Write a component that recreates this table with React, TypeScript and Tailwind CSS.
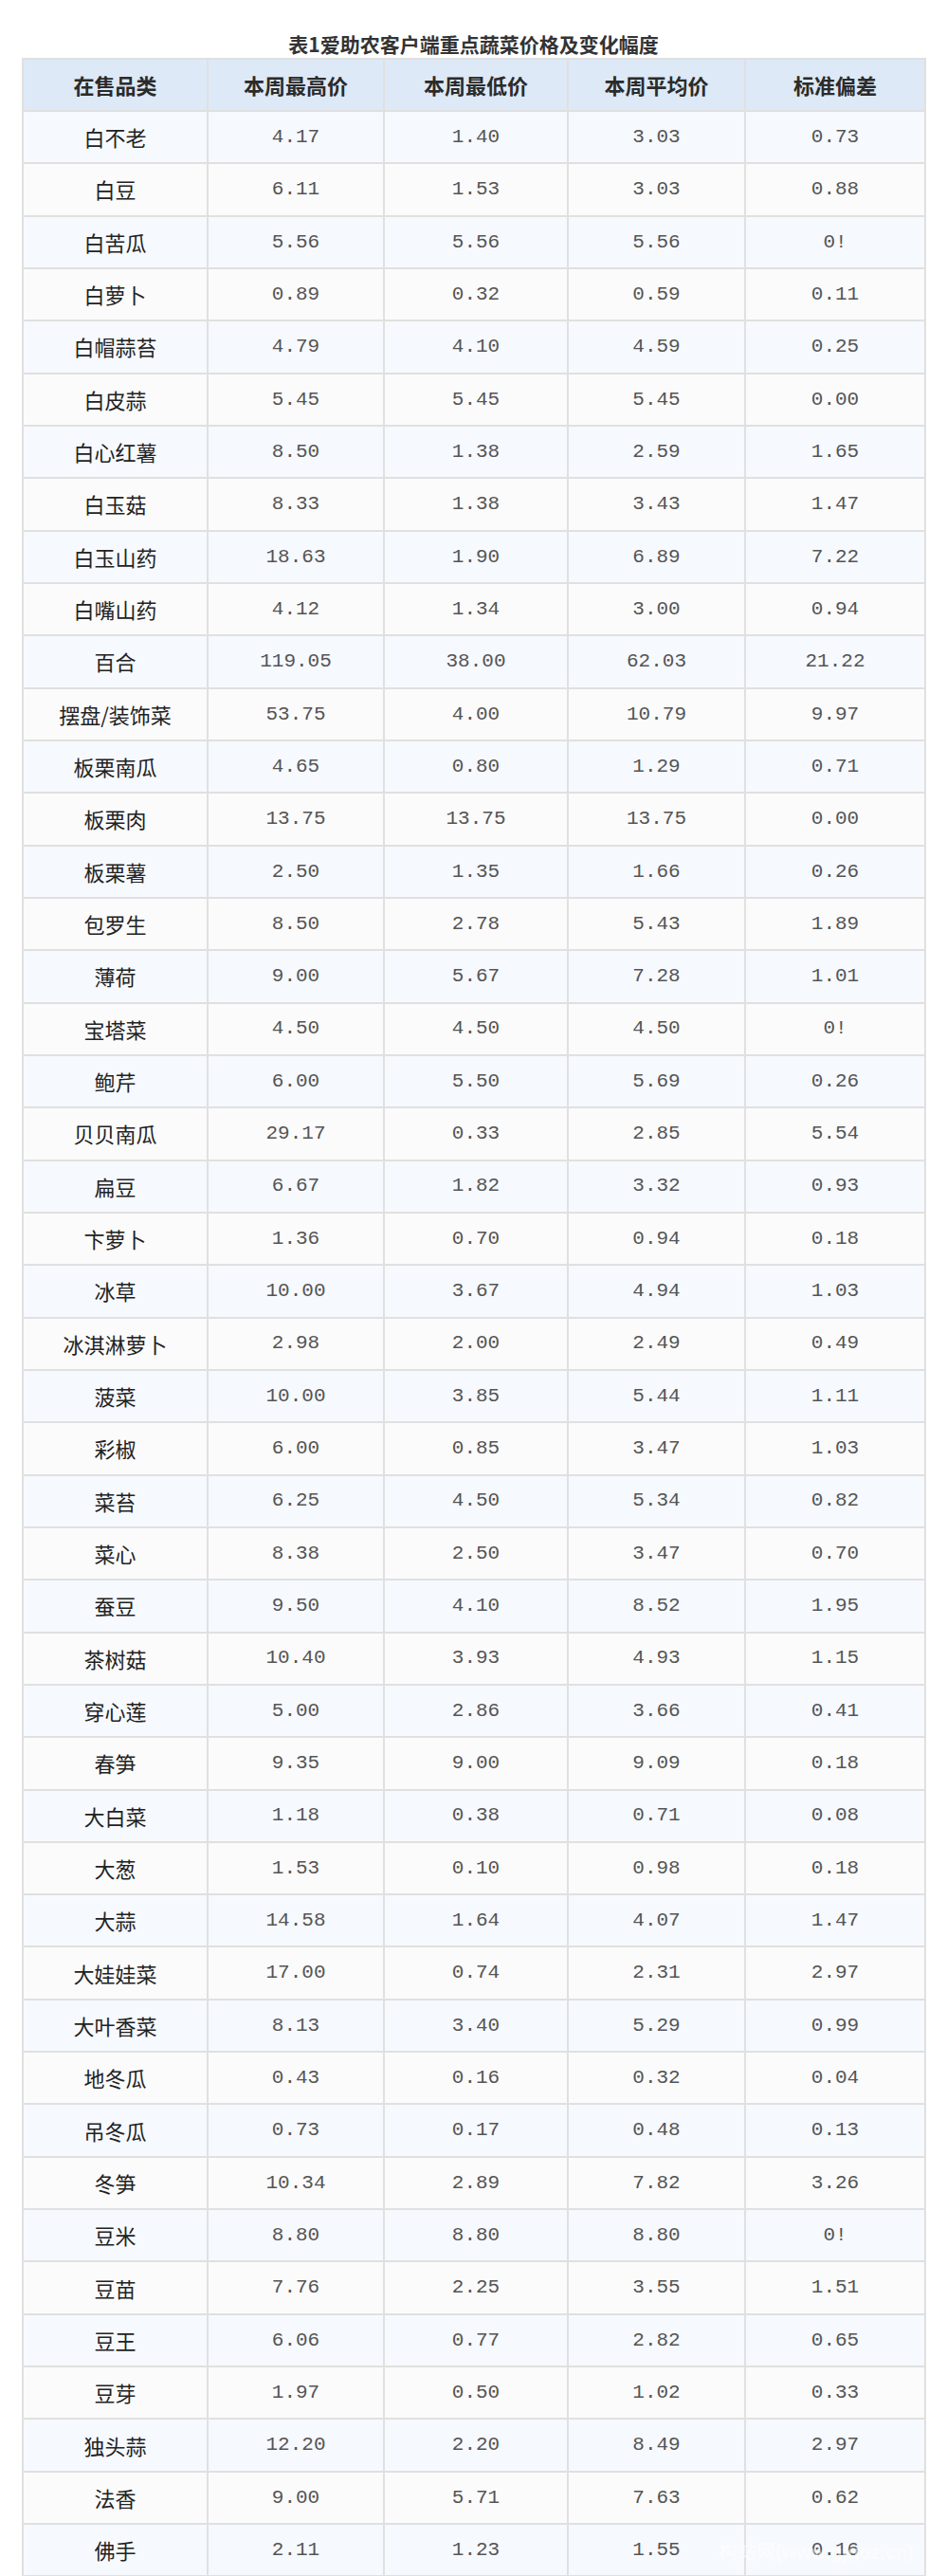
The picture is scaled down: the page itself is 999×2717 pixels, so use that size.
import React from 'react';

const ROWS: [string, string, string, string, string][] = [
  ['白不老', '4.17', '1.40', '3.03', '0.73'],
  ['白豆', '6.11', '1.53', '3.03', '0.88'],
  ['白苦瓜', '5.56', '5.56', '5.56', '0!'],
  ['白萝卜', '0.89', '0.32', '0.59', '0.11'],
  ['白帽蒜苔', '4.79', '4.10', '4.59', '0.25'],
  ['白皮蒜', '5.45', '5.45', '5.45', '0.00'],
  ['白心红薯', '8.50', '1.38', '2.59', '1.65'],
  ['白玉菇', '8.33', '1.38', '3.43', '1.47'],
  ['白玉山药', '18.63', '1.90', '6.89', '7.22'],
  ['白嘴山药', '4.12', '1.34', '3.00', '0.94'],
  ['百合', '119.05', '38.00', '62.03', '21.22'],
  ['摆盘/装饰菜', '53.75', '4.00', '10.79', '9.97'],
  ['板栗南瓜', '4.65', '0.80', '1.29', '0.71'],
  ['板栗肉', '13.75', '13.75', '13.75', '0.00'],
  ['板栗薯', '2.50', '1.35', '1.66', '0.26'],
  ['包罗生', '8.50', '2.78', '5.43', '1.89'],
  ['薄荷', '9.00', '5.67', '7.28', '1.01'],
  ['宝塔菜', '4.50', '4.50', '4.50', '0!'],
  ['鲍芹', '6.00', '5.50', '5.69', '0.26'],
  ['贝贝南瓜', '29.17', '0.33', '2.85', '5.54'],
  ['扁豆', '6.67', '1.82', '3.32', '0.93'],
  ['卞萝卜', '1.36', '0.70', '0.94', '0.18'],
  ['冰草', '10.00', '3.67', '4.94', '1.03'],
  ['冰淇淋萝卜', '2.98', '2.00', '2.49', '0.49'],
  ['菠菜', '10.00', '3.85', '5.44', '1.11'],
  ['彩椒', '6.00', '0.85', '3.47', '1.03'],
  ['菜苔', '6.25', '4.50', '5.34', '0.82'],
  ['菜心', '8.38', '2.50', '3.47', '0.70'],
  ['蚕豆', '9.50', '4.10', '8.52', '1.95'],
  ['茶树菇', '10.40', '3.93', '4.93', '1.15'],
  ['穿心莲', '5.00', '2.86', '3.66', '0.41'],
  ['春笋', '9.35', '9.00', '9.09', '0.18'],
  ['大白菜', '1.18', '0.38', '0.71', '0.08'],
  ['大葱', '1.53', '0.10', '0.98', '0.18'],
  ['大蒜', '14.58', '1.64', '4.07', '1.47'],
  ['大娃娃菜', '17.00', '0.74', '2.31', '2.97'],
  ['大叶香菜', '8.13', '3.40', '5.29', '0.99'],
  ['地冬瓜', '0.43', '0.16', '0.32', '0.04'],
  ['吊冬瓜', '0.73', '0.17', '0.48', '0.13'],
  ['冬笋', '10.34', '2.89', '7.82', '3.26'],
  ['豆米', '8.80', '8.80', '8.80', '0!'],
  ['豆苗', '7.76', '2.25', '3.55', '1.51'],
  ['豆王', '6.06', '0.77', '2.82', '0.65'],
  ['豆芽', '1.97', '0.50', '1.02', '0.33'],
  ['独头蒜', '12.20', '2.20', '8.49', '2.97'],
  ['法香', '9.00', '5.71', '7.63', '0.62'],
  ['佛手', '2.11', '1.23', '1.55', '0.16'],
];

const HEADERS = ['在售品类', '本周最高价', '本周最低价', '本周平均价', '标准偏差'];
const COL_W = ['w-[195px]', 'w-[186px]', 'w-[194px]', 'w-[187px]', 'w-[190px]'];

export default function App() {
  return (
    <div className="relative w-[999px] h-[2717px] overflow-hidden bg-white font-['Noto_Sans_CJK_SC',sans-serif] text-[#222]">
      <div className="pt-[30px] h-[61px] text-center text-[21px] leading-[32px] font-bold text-[#333]">
        表1爱助农客户端重点蔬菜价格及变化幅度
      </div>

      <table className="ml-[23px] w-[952px] table-fixed border-collapse border-2 border-[#e0e0e0]">
        <colgroup>
          {COL_W.map((w, i) => <col key={i} className={w} />)}
        </colgroup>
        <thead>
          <tr className="h-[55px] bg-[#dde9f6]">
            {HEADERS.map(h => (
              <th key={h} className="border-2 border-[#e0e0e0] p-0 text-[22px] font-bold text-[#2b2b2b] text-center align-middle">
                {h}
              </th>
            ))}
          </tr>
        </thead>
        <tbody>
          {ROWS.map((r, i) => (
            <tr key={r[0]} className={`h-[55.33px] ${i % 2 === 0 ? 'bg-[#f6f9fe]' : 'bg-[#fbfbfb]'}`}>
              <td className="border-2 border-[#e0e0e0] p-0 text-center align-middle text-[22px] text-[#222]">
                {r[0]}
              </td>
              {r.slice(1).map((v, j) => (
                <td key={j} className="border-2 border-[#e0e0e0] p-0 text-center align-middle text-[21px] text-[#555] font-['Liberation_Mono',monospace]">
                  {v}
                </td>
              ))}
            </tr>
          ))}
        </tbody>
      </table>

      {/* watermark */}
      <div className="absolute left-[758px] top-[2677px] text-[20px] font-bold text-white/50 font-['Liberation_Sans','Noto_Sans_CJK_SC',sans-serif] whitespace-nowrap pointer-events-none">
        构站网(www.gjgoz.cn)
      </div>
    </div>
  );
}
